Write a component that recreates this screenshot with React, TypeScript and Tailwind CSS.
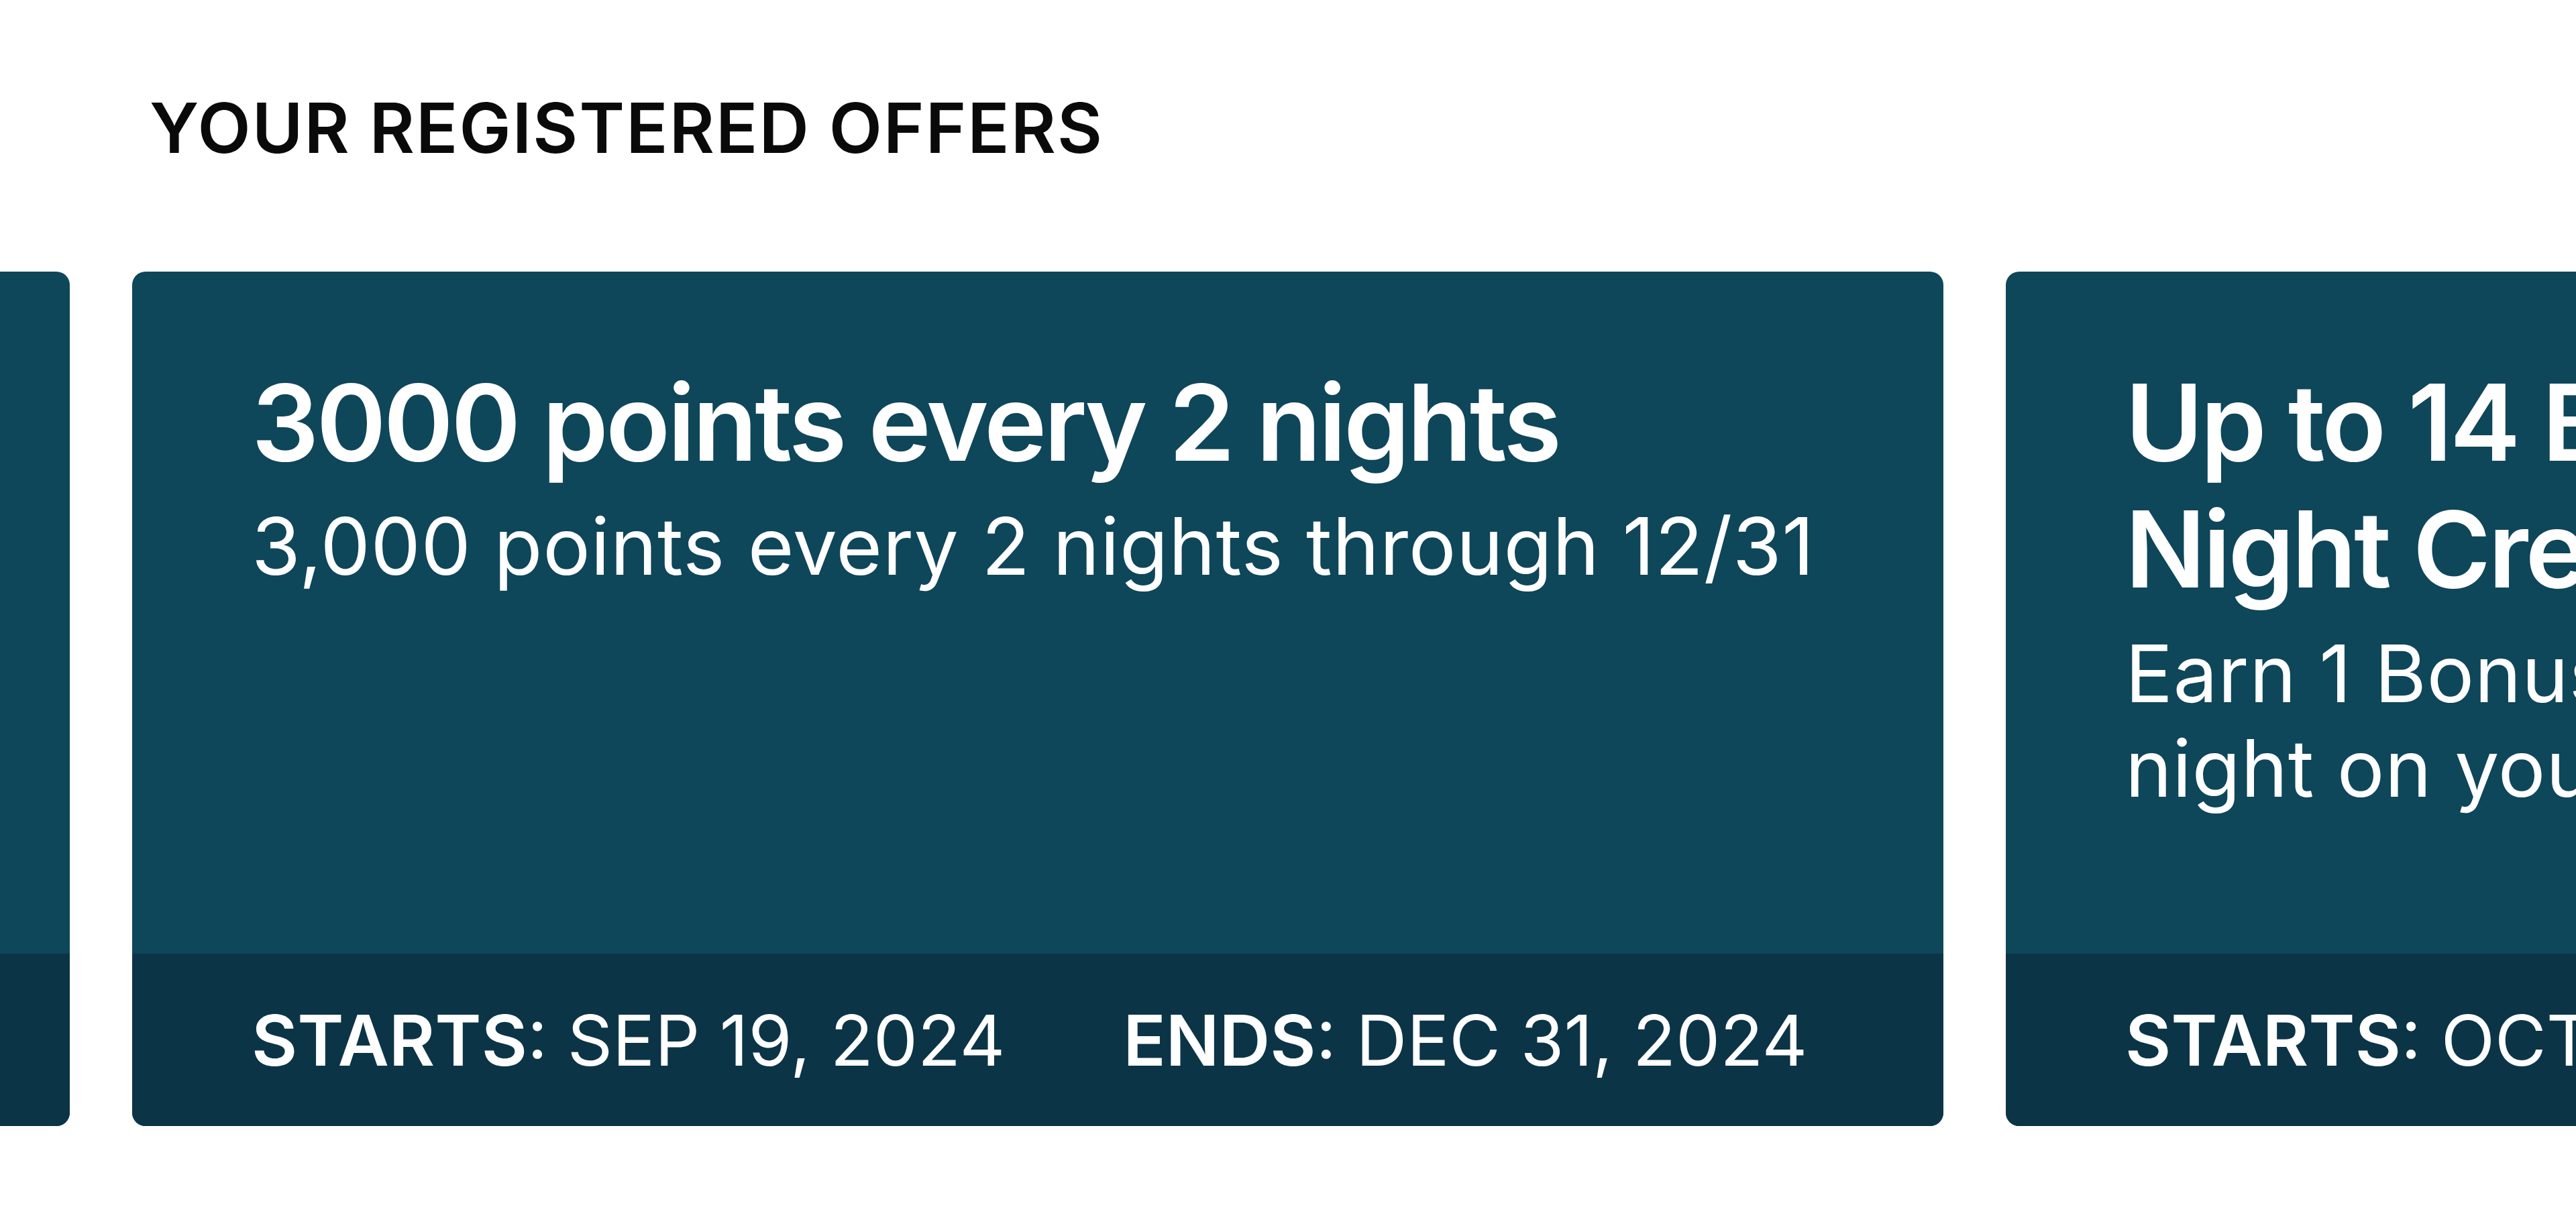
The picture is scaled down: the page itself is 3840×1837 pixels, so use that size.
import React from 'react';

type Offer = {
  id: string;
  title: string;
  description: string;
  starts: string;
  ends: string;
};

const offers: Offer[] = [
  {
    id: 'prev',
    title: 'Double points on weekend stays',
    description: 'Earn 2X points on stays that include a Friday or Saturday night',
    starts: 'AUG 01, 2024',
    ends: 'NOV 30, 2024',
  },
  {
    id: 'points',
    title: '3000 points every 2 nights',
    description: '3,000 points every 2 nights through 12/31',
    starts: 'SEP 19, 2024',
    ends: 'DEC 31, 2024',
  },
  {
    id: 'nights',
    title: 'Up to 14 Bonus Elite Qualifying Night Credits',
    description: 'Earn 1 Bonus Elite Night Credit for each night on your stay through 12/31',
    starts: 'OCT 01, 2024',
    ends: 'DEC 31, 2024',
  },
];

const OfferCard = ({ offer }: { offer: Offer }) => (
  <div className="w-[2700px] h-[1274px] shrink-0 flex flex-col rounded-[20px] overflow-hidden bg-[#0e465a] text-white">
    <div className="flex-1 px-[178px] pt-[130px]">
      <h3 className="text-[158px] leading-[1.2] font-semibold tracking-[-0.025em]">{offer.title}</h3>
      <p className="mt-[20px] text-[118px] leading-[1.2] font-normal tracking-[0.005em]">{offer.description}</p>
    </div>
    <div className="h-[257px] px-[178px] flex items-center gap-[176px] bg-[#0c3447] text-[105px] leading-none whitespace-nowrap">
      <span>
        <span className="font-semibold">STARTS</span>: {offer.starts}
      </span>
      <span>
        <span className="font-semibold">ENDS</span>: {offer.ends}
      </span>
    </div>
  </div>
);

export default function App() {
  return (
    <div className="w-full min-h-screen bg-white overflow-hidden font-['Inter','Noto_Sans',sans-serif]">
      <h2 className="pl-[223px] pt-[129px] text-[103px] leading-[1.2] font-semibold tracking-[0.02em] text-[#0a0a0a]">
        YOUR REGISTERED OFFERS
      </h2>

      {/* carousel, scrolled so the second card is in view */}
      <div className="mt-[152px] flex gap-[93px] ml-[-2596px]">
        {offers.map((offer) => (
          <OfferCard key={offer.id} offer={offer} />
        ))}
      </div>
    </div>
  );
}
